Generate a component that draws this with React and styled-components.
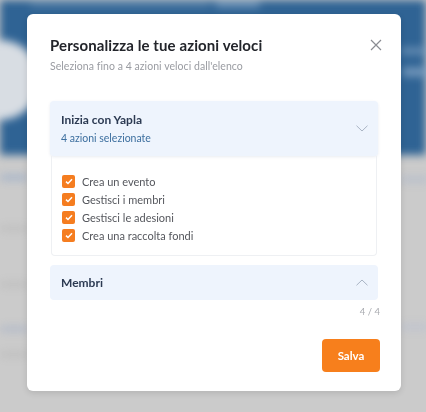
import React from "react";
import styled, { createGlobalStyle } from "styled-components";

const GlobalStyle = createGlobalStyle`
  html, body {
    margin: 0;
    padding: 0;
  }
  body {
    font-family: Lato, "Noto Sans", "Liberation Sans", sans-serif;
    background: #cbcbcb;
  }
  * { box-sizing: border-box; }
`;

const Page = styled.div`
  position: relative;
  width: 426px;
  height: 412px;
  overflow: hidden;
  background: #cbcbcb;
`;

// blurred page behind the dialog
const Backdrop = styled.div`
  filter: blur(4px);
  height: 100%;
`;

const Hero = styled.div`
  height: 155px;
  background: #2f6394;
  position: relative;
  padding: 2px 30px;
`;

const Blob = styled.div`
  position: absolute;
  left: ${(p) => p.x}px;
  top: ${(p) => p.y}px;
  width: ${(p) => p.w}px;
  height: ${(p) => p.h}px;
  border-radius: ${(p) => (p.round ? "50%" : "3px")};
  background: ${(p) => p.color};
`;

const GreyArea = styled.div`
  position: relative;
  height: 257px;
`;

const Modal = styled.div`
  position: absolute;
  left: 27px;
  top: 14px;
  width: 374px;
  height: 377px;
  background: #fff;
  border-radius: 6px;
  box-shadow: 0 2px 6px rgba(0, 0, 0, 0.12);
  padding: 22px 23px 19px 23px;
  display: flex;
  flex-direction: column;
`;

const Head = styled.div`
  display: flex;
  justify-content: space-between;
  align-items: flex-start;
`;

const Title = styled.h2`
  margin: 0;
  font-size: 15px;
  font-weight: 700;
  color: #23252b;
  letter-spacing: 0.1px;
`;

const Subtitle = styled.p`
  margin: 6px 0 0;
  font-size: 10.5px;
  color: #9a9ca2;
  letter-spacing: 0.05px;
`;

const Close = styled.button`
  border: 0;
  background: none;
  padding: 0;
  margin: 2px -5px 0 0;
  width: 14px;
  height: 14px;
  display: flex;
  align-items: center;
  justify-content: center;
  cursor: pointer;
`;

const Section = styled.div`
  margin-top: ${(p) => p.mt}px;
`;

const AccordionHead = styled.div`
  background: #eef4fd;
  border-radius: 4px;
  padding: ${(p) => (p.tall ? "11px 10px 12px 11px" : "10px 10px 10px 11px")};
  display: flex;
  justify-content: space-between;
  align-items: center;
  box-shadow: ${(p) => (p.open ? "0 1px 3px rgba(40, 70, 120, 0.1)" : "none")};
`;

const HeadText = styled.div`
  display: flex;
  flex-direction: column;
  gap: 5px;
`;

const AccTitle = styled.div`
  font-size: 12px;
  font-weight: 700;
  color: #2c3a52;
`;

const AccSub = styled.div`
  font-size: 10.5px;
  color: #3d6f9f;
`;

const Panel = styled.div`
  margin: 0 1px;
  border: 1px solid #eef0f3;
  border-top: 0;
  border-radius: 0 0 4px 4px;
  padding: 19px 10px 13px;
  display: flex;
  flex-direction: column;
  gap: 5px;
`;

const Option = styled.label`
  display: flex;
  align-items: center;
  gap: 7px;
  font-size: 11px;
  color: #55575d;
  height: 13px;
`;

const Box = styled.span`
  width: 13px;
  height: 13px;
  border-radius: 2px;
  background: #f57d20;
  display: flex;
  align-items: center;
  justify-content: center;
`;

const Counter = styled.div`
  text-align: right;
  font-size: 9.5px;
  color: #a9abb0;
  margin-top: 6px;
  margin-right: -2px;
`;

const Footer = styled.div`
  margin-top: auto;
  display: flex;
  justify-content: flex-end;
  margin-right: -2px;
`;

const SaveButton = styled.button`
  border: 0;
  border-radius: 4px;
  background: #f77f1c;
  color: #fff;
  font-family: inherit;
  font-size: 11.5px;
  font-weight: 700;
  width: 58px;
  height: 33px;
  cursor: pointer;
`;

const Chevron = ({ up }) => (
  <svg width="12" height="7" viewBox="0 0 12 7">
    <path
      d={up ? "M0.5 6.3L6 1L11.5 6.3" : "M0.5 0.7L6 6L11.5 0.7"}
      fill="none"
      stroke="#a9b4c4"
      strokeWidth="1"
    />
  </svg>
);

const Check = () => (
  <svg width="8" height="7" viewBox="0 0 8 7">
    <path d="M1 3.6L3 5.5L7 1.3" fill="none" stroke="#fff" strokeWidth="1.5" />
  </svg>
);

const options = [
  "Crea un evento",
  "Gestisci i membri",
  "Gestisci le adesioni",
  "Crea una raccolta fondi",
];

export default function App() {
  return (
    <Page>
      <GlobalStyle />
      <Backdrop>
        <Hero>
          <Blob x={30} y={2} w={180} h={5} color="#5580a8" />
          <Blob x={215} y={2} w={45} h={5} color="#7da0c2" />
          <Blob x={-40} y={40} w={80} h={80} round color="#d8dde3" />
          <Blob x={400} y={48} w={30} h={6} color="#6f94b8" />
          <Blob x={402} y={68} w={30} h={8} color="#7b9dbf" />
        </Hero>
        <GreyArea>
          <Blob x={0} y={20} w={28} h={5} color="#9fb0c8" />
          <Blob x={400} y={22} w={30} h={5} color="#b3bccb" />
          <Blob x={0} y={72} w={28} h={3} color="#b5b5b5" />
          <Blob x={0} y={128} w={28} h={3} color="#b5b5b5" />
          <Blob x={0} y={172} w={28} h={4} color="#a8b3c8" />
          <Blob x={400} y={170} w={30} h={4} color="#b8bfd0" />
          <Blob x={0} y={198} w={28} h={3} color="#b5b5b5" />
        </GreyArea>
      </Backdrop>

      <Modal>
        <Head>
          <div>
            <Title>Personalizza le tue azioni veloci</Title>
            <Subtitle>Seleziona fino a 4 azioni veloci dall'elenco</Subtitle>
          </div>
          <Close aria-label="Chiudi">
            <svg width="12" height="12" viewBox="0 0 12 12">
              <path d="M1 1L11 11M11 1L1 11" stroke="#8a8c92" strokeWidth="1.2" />
            </svg>
          </Close>
        </Head>

        <Section mt={29}>
          <AccordionHead tall open>
            <HeadText>
              <AccTitle>Inizia con Yapla</AccTitle>
              <AccSub>4 azioni selezionate</AccSub>
            </HeadText>
            <Chevron />
          </AccordionHead>
          <Panel>
            {options.map((o) => (
              <Option key={o}>
                <Box>
                  <Check />
                </Box>
                {o}
              </Option>
            ))}
          </Panel>
        </Section>

        <Section mt={9}>
          <AccordionHead>
            <AccTitle>Membri</AccTitle>
            <Chevron up />
          </AccordionHead>
          <Counter>4 / 4</Counter>
        </Section>

        <Footer>
          <SaveButton>Salva</SaveButton>
        </Footer>
      </Modal>
    </Page>
  );
}
